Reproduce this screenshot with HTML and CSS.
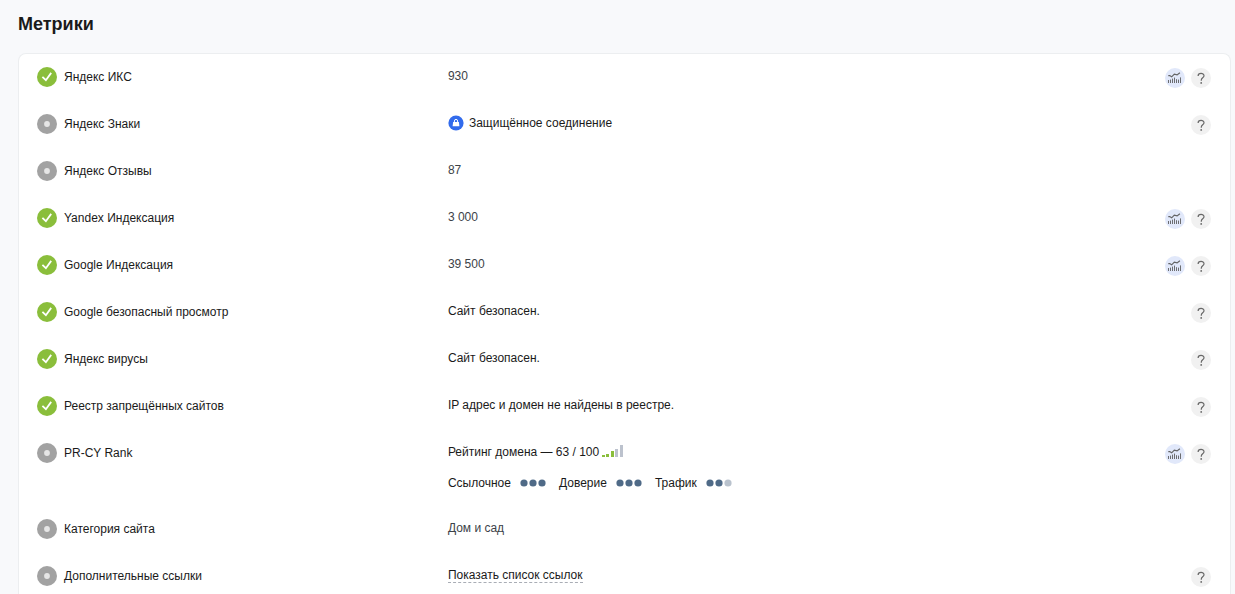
FILE: index.html
```html
<!DOCTYPE html>
<html lang="ru">
<head>
<meta charset="utf-8">
<meta name="viewport" content="width=device-width, initial-scale=1">
<title>Метрики</title>
<link rel="stylesheet" href="styles.css">
</head>
<body>
<svg class="sprite" aria-hidden="true">
  <symbol id="ok" viewBox="0 0 20 20"><circle cx="10" cy="10" r="10" fill="#8abe3b"/><path d="M5.4 9.8l3.5 3.4 5.3-7.3" fill="none" stroke="#fff" stroke-width="1.8"/></symbol>
  <symbol id="neutral" viewBox="0 0 20 20"><circle cx="10" cy="10" r="10" fill="#a2a2a2"/><circle cx="10" cy="10" r="2.9" fill="#e6e6e6"/></symbol>
  <symbol id="chart" viewBox="0 0 20 20"><circle cx="10" cy="10" r="10" fill="#e1e8fa"/><path d="M3.3 7.6l1.4 0 2 1.2 2.6-2.6 2.8.7 2.8-2.2" fill="none" stroke="#626364" stroke-width="1.2"/><path d="M3.5 15v-3M5.5 15v-3.4M7.5 15v-4.4M9.5 15v-5.4M11.5 15v-3.8M13.5 15v-3.4M15.5 15V9.4" stroke="#6c6d70" stroke-width="1"/></symbol>
  <symbol id="help" viewBox="0 0 20 20"><circle cx="10" cy="10" r="10" fill="#f1f1f1"/><path d="M7.1 7.9C7.1 4.6 13 4.6 13 7.8c0 2-2.7 2.1-2.7 4.2v.7" fill="none" stroke="#686868" stroke-width="1.2"/><circle cx="10.2" cy="14.9" r=".9" fill="#686868"/></symbol>
  <symbol id="lock" viewBox="0 0 16 16"><circle cx="8" cy="8" r="7.6" fill="#326bec"/><path d="M6.4 7V6a1.6 1.6 0 0 1 3.2 0v1" fill="none" stroke="#fff" stroke-width="1"/><path d="M5.1 6.9h5.8l.5 4.3H4.6z" fill="#fff"/></symbol>
  <symbol id="dots3" viewBox="0 0 26 8"><g fill="#4f6a87"><circle cx="4" cy="4" r="3.6"/><circle cx="13" cy="4" r="3.6"/><circle cx="22" cy="4" r="3.6"/></g></symbol>
  <symbol id="dots2" viewBox="0 0 26 8"><g fill="#4f6a87"><circle cx="4" cy="4" r="3.6"/><circle cx="13" cy="4" r="3.6"/></g><circle cx="22" cy="4" r="3.6" fill="#b9c2cd"/></symbol>
</svg>
<main class="page">
  <h1 class="title">Метрики</h1>
  <section class="card">
    <div class="row">
      <div class="name"><svg class="icon"><use href="#ok"/></svg>Яндекс ИКС</div>
      <div class="value muted">930</div>
      <div class="actions"><button class="round" aria-label="График"><svg class="icon"><use href="#chart"/></svg></button><button class="round" aria-label="Справка"><svg class="icon"><use href="#help"/></svg></button></div>
    </div>
    <div class="row">
      <div class="name"><svg class="icon"><use href="#neutral"/></svg>Яндекс Знаки</div>
      <div class="value"><div class="sign"><svg class="lock"><use href="#lock"/></svg>Защищённое соединение</div></div>
      <div class="actions"><button class="round" aria-label="Справка"><svg class="icon"><use href="#help"/></svg></button></div>
    </div>
    <div class="row">
      <div class="name"><svg class="icon"><use href="#neutral"/></svg>Яндекс Отзывы</div>
      <div class="value muted">87</div>
    </div>
    <div class="row">
      <div class="name"><svg class="icon"><use href="#ok"/></svg>Yandex Индексация</div>
      <div class="value muted">3 000</div>
      <div class="actions"><button class="round" aria-label="График"><svg class="icon"><use href="#chart"/></svg></button><button class="round" aria-label="Справка"><svg class="icon"><use href="#help"/></svg></button></div>
    </div>
    <div class="row">
      <div class="name"><svg class="icon"><use href="#ok"/></svg>Google Индексация</div>
      <div class="value muted">39 500</div>
      <div class="actions"><button class="round" aria-label="График"><svg class="icon"><use href="#chart"/></svg></button><button class="round" aria-label="Справка"><svg class="icon"><use href="#help"/></svg></button></div>
    </div>
    <div class="row">
      <div class="name"><svg class="icon"><use href="#ok"/></svg>Google безопасный просмотр</div>
      <div class="value">Сайт безопасен.</div>
      <div class="actions"><button class="round" aria-label="Справка"><svg class="icon"><use href="#help"/></svg></button></div>
    </div>
    <div class="row">
      <div class="name"><svg class="icon"><use href="#ok"/></svg>Яндекс вирусы</div>
      <div class="value">Сайт безопасен.</div>
      <div class="actions"><button class="round" aria-label="Справка"><svg class="icon"><use href="#help"/></svg></button></div>
    </div>
    <div class="row">
      <div class="name"><svg class="icon"><use href="#ok"/></svg>Реестр запрещённых сайтов</div>
      <div class="value">IP адрес и домен не найдены в реестре.</div>
      <div class="actions"><button class="round" aria-label="Справка"><svg class="icon"><use href="#help"/></svg></button></div>
    </div>
    <div class="row">
      <div class="name"><svg class="icon"><use href="#neutral"/></svg>PR-CY Rank</div>
      <div class="value">
        <div class="rating">Рейтинг домена — 63 / 100<svg class="bars" viewBox="0 0 22 12"><path d="M0 10h3v2H0zM4 9h3v3H4zM9 6h3v6H9z" fill="#8abe3b"/><path d="M13 4h3v8h-3zM18 0h3v12h-3z" fill="#bcc2cd"/></svg></div>
        <div class="factors">
          <div class="factor">Ссылочное<svg class="dots"><use href="#dots3"/></svg></div>
          <div class="factor">Доверие<svg class="dots"><use href="#dots3"/></svg></div>
          <div class="factor">Трафик<svg class="dots"><use href="#dots2"/></svg></div>
        </div>
      </div>
      <div class="actions"><button class="round" aria-label="График"><svg class="icon"><use href="#chart"/></svg></button><button class="round" aria-label="Справка"><svg class="icon"><use href="#help"/></svg></button></div>
    </div>
    <div class="row">
      <div class="name"><svg class="icon"><use href="#neutral"/></svg>Категория сайта</div>
      <div class="value muted">Дом и сад</div>
    </div>
    <div class="row">
      <div class="name"><svg class="icon"><use href="#neutral"/></svg>Дополнительные ссылки</div>
      <div class="value"><button class="reveal">Показать список ссылок</button></div>
      <div class="actions"><button class="round" aria-label="Справка"><svg class="icon"><use href="#help"/></svg></button></div>
    </div>
  </section>
</main>
</body>
</html>
```
FILE: styles.css
```css
* { box-sizing: border-box; }
body {
  margin: 0;
  background: #f8f9fb;
  color: #1a1a1a;
  font: 12px/20px "Liberation Sans", Arial, sans-serif;
}
button {
  padding: 0;
  border: 0;
  background: none;
  color: inherit;
  font: inherit;
  cursor: pointer;
}
svg { display: block; flex: none; }
.sprite { position: absolute; width: 0; height: 0; }
.page {
  display: flex;
  flex-direction: column;
  min-height: 100vh;
  padding: 12px 4px 0 18px;
}
.title {
  margin: 0 0 17px;
  font-size: 18px;
  line-height: 24px;
}
.card {
  flex: 1;
  padding-top: 12px;
  border: 1px solid #eceef0;
  border-bottom: 0;
  border-radius: 8px 8px 0 0;
  background: #fff;
}
.row {
  display: grid;
  grid-template-columns: 35% 1fr auto;
  align-items: start;
  min-height: 47px;
  padding: 0 19px 0 18px;
}
.row:last-child { min-height: 28px; }
.name { display: flex; gap: 7px; padding-top: 1px; }
.icon { width: 20px; height: 20px; }
.muted { color: #3c4248; }
.sign { display: flex; align-items: center; gap: 5px; }
.lock { width: 16px; height: 16px; }
.rating { display: flex; align-items: flex-start; gap: 3px; }
.bars { width: 22px; height: 12px; margin-top: 3px; }
.factors { display: flex; gap: 13px; padding: 11px 0 25px; }
.factor { display: flex; align-items: center; gap: 9px; }
.dots { width: 26px; height: 8px; }
.actions { display: flex; gap: 6px; padding-top: 2px; }
.round { border-radius: 50%; }
.reveal { border-bottom: 1px dashed #a9adb5; line-height: 14px; }
```
